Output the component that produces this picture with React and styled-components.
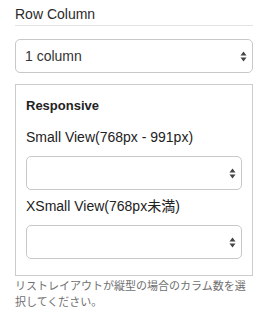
import * as React from "react"
import styled, { createGlobalStyle } from "styled-components"

const GlobalStyle = createGlobalStyle`
  html, body {
    margin: 0;
    padding: 0;
    background: #fff;
  }
  body {
    font-family: "Liberation Sans", Arial, "Noto Sans CJK JP", sans-serif;
    color: #333;
  }
`

const Sidebar = styled.div`
  width: 238px;
  padding: 0 15px;
`

const SectionTitle = styled.h3`
  margin: 0;
  padding: 4px 0 1px;
  font-size: 14px;
  font-weight: normal;
  line-height: 20px;
  color: #2b2b2b;
  border-bottom: 1px solid #e3e3e3;
`

const SelectWrap = styled.div`
  position: relative;
  margin-top: ${(p) => p.$top || 0}px;
`

const Select = styled.select`
  display: block;
  width: 100%;
  height: 34px;
  box-sizing: border-box;
  padding: 0 24px 0 9px;
  border: 1px solid #c8c8c8;
  border-radius: 5px;
  background: #fff;
  font-family: "Liberation Sans", Arial, sans-serif;
  font-size: 14px;
  color: #333;
  appearance: none;
  -webkit-appearance: none;
  outline: none;
`

const Arrows = styled.svg`
  position: absolute;
  right: 6px;
  top: 50%;
  width: 7px;
  height: 11px;
  margin-top: -5px;
  pointer-events: none;
`

const Panel = styled.div`
  margin-top: 11px;
  border: 1px solid #cccccc;
  padding: 11px 10px 16px;
`

const PanelHeading = styled.div`
  font-size: 13px;
  font-weight: bold;
  line-height: 20px;
  color: #222;
`

const FieldLabel = styled.div`
  margin-top: ${(p) => p.$top}px;
  font-size: 14px;
  line-height: 20px;
  color: #222;
`

const HelpText = styled.p`
  margin: 2px 0 0;
  font-family: "Liberation Sans", Arial, "Noto Sans CJK JP", sans-serif;
  font-size: 11px;
  line-height: 16px;
  color: #6f6f6f;
`

const SelectBox = ({ value, top, options = [] }) => (
  <SelectWrap $top={top}>
    <Select defaultValue={value}>
      {options.map((o) => (
        <option key={o}>{o}</option>
      ))}
    </Select>
    <Arrows viewBox="0 0 7 11">
      <path d="M3.5 0.5 L6.5 4.5 L0.5 4.5 Z" fill="#444" />
      <path d="M0.5 6.5 L6.5 6.5 L3.5 10.5 Z" fill="#444" />
    </Arrows>
  </SelectWrap>
)

export default function App() {
  return (
    <>
      <GlobalStyle />
      <Sidebar>
        <SectionTitle>Row Column</SectionTitle>
        <SelectBox
          top={13}
          value="1 column"
          options={["1 column", "2 columns", "3 columns", "4 columns"]}
        />
        <Panel>
          <PanelHeading>Responsive</PanelHeading>
          <FieldLabel $top={11}>Small View(768px - 991px)</FieldLabel>
          <SelectBox top={9} value="" options={["", "1 column", "2 columns"]} />
          <FieldLabel $top={6}>XSmall View(768px未満)</FieldLabel>
          <SelectBox top={9} value="" options={["", "1 column", "2 columns"]} />
        </Panel>
        <HelpText>
          リストレイアウトが縦型の場合のカラム数を選択してください。
        </HelpText>
      </Sidebar>
    </>
  )
}
